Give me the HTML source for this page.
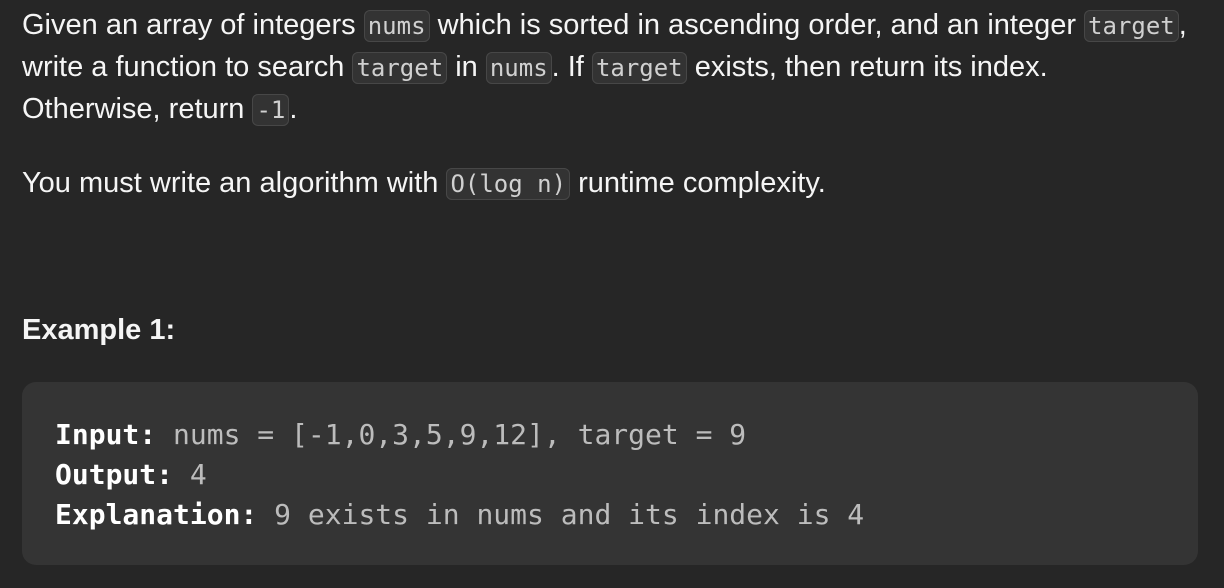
<!DOCTYPE html>
<html><head><style>
html,body{margin:0;padding:0;background:#262626;width:1224px;height:588px;overflow:hidden}
body{font-family:"Liberation Sans",Arial,sans-serif;color:#f5f5f5;font-size:29px}
p{margin:0;position:absolute;left:22px;line-height:42px;white-space:nowrap}
code{font-family:"DejaVu Sans Mono","Liberation Mono",monospace;font-size:24px;color:#d0d0d0;background:#333;border:1px solid #474747;border-radius:6px;padding:1px 3px}
.b{font-weight:bold}
pre{position:absolute;left:22px;top:382px;width:1176px;height:183px;margin:0;background:#343434;border-radius:14px;box-sizing:border-box;padding:33px 0 0 33px;font-family:"DejaVu Sans Mono","Liberation Mono",monospace;font-size:28px;line-height:40px;color:#bcbcbc}
pre b{color:#fff}
</style></head><body>
<p style="top:4px">Given an array of integers <code>nums</code> which is sorted in ascending order, and an integer <code>target</code>,</p>
<p style="top:46px">write a function to search <code>target</code> in <code>nums</code>. If <code>target</code> exists, then return its index.</p>
<p style="top:88px">Otherwise, return <code>-1</code>.</p>
<p style="top:162px">You must write an algorithm with <code>O(log n)</code> runtime complexity.</p>
<p class="b" style="top:309px">Example 1:</p>
<pre><b>Input:</b> nums = [-1,0,3,5,9,12], target = 9
<b>Output:</b> 4
<b>Explanation:</b> 9 exists in nums and its index is 4</pre>
</body></html>
